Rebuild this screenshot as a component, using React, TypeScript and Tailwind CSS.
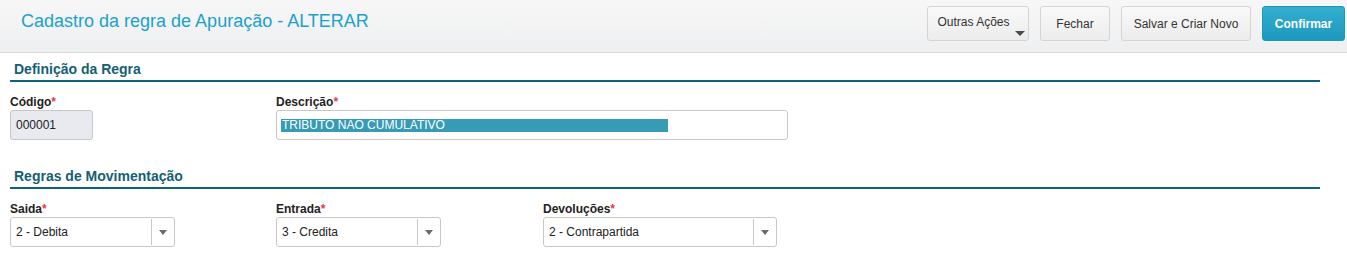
import { ReactNode } from "react";

function Label(props: { children: ReactNode }) {
  return (
    <div className="h-[13px] text-[12px] leading-[13px] font-bold text-[#222]">
      {props.children}
      <span className="text-[#e8384f]">*</span>
    </div>
  );
}

function SectionTitle(props: { title: string }) {
  return (
    <div className="border-b-2 border-[#0e6279] pl-1 pb-[2px]">
      <h2 className="text-[14px] leading-[17px] font-bold text-[#155f74]">{props.title}</h2>
    </div>
  );
}

function Select(props: { value: string; width: string }) {
  return (
    <div
      className={`mt-[1px] flex h-[30px] items-center rounded-[3px] border border-[#c8c8c8] bg-white ${props.width}`}
    >
      <span className="flex-1 truncate pl-[5px] text-[12px] text-[#222]">{props.value}</span>
      <div className="flex h-[26px] w-[23px] items-center justify-center border-l border-[#c8c8c8]">
        <span className="h-0 w-0 border-x-[4px] border-t-[5px] border-x-transparent border-t-[#6b6b6b]" />
      </div>
    </div>
  );
}

function HeaderButton(props: { children: ReactNode; className?: string }) {
  return (
    <button
      type="button"
      className={`relative h-[35px] rounded-[3px] border border-[#d4d4d4] bg-gradient-to-b from-[#f9f9f9] to-[#ececec] text-[12px] text-[#333] ${props.className ?? ""}`}
    >
      {props.children}
    </button>
  );
}

export default function App() {
  return (
    <div
      className="h-[256px] w-[1347px] overflow-hidden bg-white"
      style={{ fontFamily: '"Liberation Sans", Arial, sans-serif' }}
    >
      <header className="flex h-[53px] items-start justify-between border-b border-[#d9d9d9] bg-gradient-to-b from-[#f7f7f7] to-[#eeeff1]">
        <h1 className="pl-[21px] pt-[10px] text-[18px] leading-[22px] text-[#1ba2cc]">
          Cadastro da regra de Apuração - ALTERAR
        </h1>
        <div className="flex gap-[11px] pr-[2px] pt-[6px]">
          <HeaderButton className="w-[102px] pb-[4px] pr-[9px]">
            Outras Ações
            <span className="absolute bottom-[4px] right-[3px] h-0 w-0 border-x-[5px] border-t-[5px] border-x-transparent border-t-[#4a4a4a]" />
          </HeaderButton>
          <HeaderButton className="w-[70px]">Fechar</HeaderButton>
          <HeaderButton className="w-[130px]">Salvar e Criar Novo</HeaderButton>
          <button
            type="button"
            className="h-[35px] w-[83px] rounded-[3px] border border-[#1b97ba] bg-gradient-to-b from-[#35aecf] to-[#1999bd] text-[12px] font-bold text-white"
          >
            Confirmar
          </button>
        </div>
      </header>

      <main className="w-[1320px] pl-[10px] pt-[8px]">
        <SectionTitle title="Definição da Regra" />
        <div className="mt-[14px] grid grid-cols-[266px_1fr]">
          <div>
            <Label>Código</Label>
            <div className="mt-[1px] flex h-[30px] w-[83px] items-center rounded-[3px] border border-[#c8c8c8] bg-[#e8eaef] pl-[5px] text-[12px] text-[#222]">
              000001
            </div>
          </div>
          <div>
            <Label>Descrição</Label>
            <div className="mt-[1px] flex h-[30px] w-[512px] items-center rounded-[3px] border border-[#c8c8c8] bg-white pl-[4px]">
              <span className="w-[387px] bg-[#369bb4] pl-[1px] text-[12px] leading-[13px] text-white">
                TRIBUTO NAO CUMULATIVO
              </span>
            </div>
          </div>
        </div>

        <div className="mt-[28px]">
          <SectionTitle title="Regras de Movimentação" />
        </div>
        <div className="mt-[14px] grid grid-cols-[266px_267px_1fr]">
          <div>
            <Label>Saida</Label>
            <Select value="2 - Debita" width="w-[165px]" />
          </div>
          <div>
            <Label>Entrada</Label>
            <Select value="3 - Credita" width="w-[165px]" />
          </div>
          <div>
            <Label>Devoluções</Label>
            <Select value="2 - Contrapartida" width="w-[234px]" />
          </div>
        </div>
      </main>
    </div>
  );
}
